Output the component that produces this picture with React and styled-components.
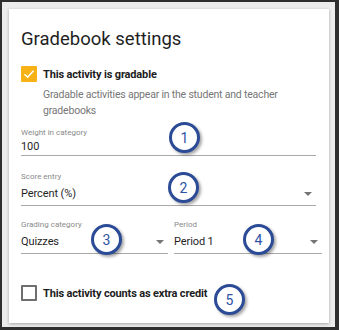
import styled, { createGlobalStyle } from "styled-components";

const GlobalStyle = createGlobalStyle`
  html, body {
    margin: 0;
    padding: 0;
    background: #2f2f2f;
  }
  * {
    box-sizing: border-box;
  }
`;

const Frame = styled.div`
  width: 339px;
  height: 330px;
  padding: 2px 4px 3px 2px;
  background: #2f2f2f;
  display: flex;
`;

const Backdrop = styled.div`
  flex: 1;
  display: flex;
  padding: 7px 6px 4px 7px;
  background: #ececec;
`;

const Card = styled.section`
  position: relative;
  flex: 1;
  display: flex;
  flex-direction: column;
  padding: 18px 13px 0 12px;
  background: #fff;
  box-shadow: 0 1px 3px rgba(0, 0, 0, 0.3);
  font-family: Roboto, "Liberation Sans", sans-serif;
  color: #212121;
`;

const Title = styled.h2`
  margin: 0;
  font-size: 18.5px;
  line-height: 24px;
  font-weight: 400;
  color: #1f1f1f;
`;

const CheckRow = styled.label`
  display: flex;
  align-items: center;
  gap: 6px;
  margin-top: ${(p) => p.$top}px;
  height: 16px;
`;

const Box = styled.span`
  width: 16px;
  height: 16px;
  flex: none;
  display: flex;
  align-items: center;
  justify-content: center;
  border-radius: 1px;
  background: ${(p) => (p.$checked ? "#f7b217" : "#fff")};
  border: ${(p) => (p.$checked ? "none" : "2px solid #6f6f6f")};
`;

const CheckText = styled.span`
  font-size: 11px;
  letter-spacing: -0.15px;
  font-weight: 700;
  color: #1c1c1c;
`;

const Hint = styled.p`
  margin: 5px 0 0 22px;
  font-size: 10.5px;
  letter-spacing: -0.2px;
  line-height: 15.5px;
  color: #777;
`;

const Field = styled.div`
  display: flex;
  flex-direction: column;
  margin-top: ${(p) => p.$top}px;
  border-bottom: 1px solid #a9a9a9;
  min-width: 0;
`;

const Label = styled.span`
  font-size: 8px;
  line-height: 11px;
  color: #8a8a8a;
`;

const Value = styled.div`
  display: flex;
  align-items: center;
  justify-content: space-between;
  font-size: 11px;
  letter-spacing: -0.1px;
  line-height: 16px;
  color: #1f1f1f;
  padding: ${(p) => (p.$select ? "4px 4px 3px 0" : "1px 0 0")};
`;

const Arrow = styled.span`
  width: 0;
  height: 0;
  border-left: 4px solid transparent;
  border-right: 4px solid transparent;
  border-top: 4px solid #757575;
`;

const Columns = styled.div`
  display: grid;
  grid-template-columns: 147px 1fr;
  gap: 6px;
  margin: 13px -6px 0 0;
`;

const Badge = styled.span`
  position: absolute;
  left: ${(p) => p.$x}px;
  top: ${(p) => p.$y}px;
  width: 31px;
  height: 31px;
  border-radius: 50%;
  border: 3px solid #2b4b97;
  background: #fff;
  box-shadow: 2px 2px 3px rgba(0, 0, 0, 0.35);
  display: flex;
  align-items: center;
  justify-content: center;
  font-size: 14px;
  color: #2e53a4;
`;

const Check = () => (
  <svg width="12" height="10" viewBox="0 0 12 10">
    <path d="M1.5 5.2 L4.6 8.2 L10.5 1.8" fill="none" stroke="#fff" strokeWidth="1.6" />
  </svg>
);

const Select = ({ label, value, top }) => (
  <Field $top={top}>
    <Label>{label}</Label>
    <Value $select>
      {value}
      <Arrow />
    </Value>
  </Field>
);

const badges = [
  { n: 1, x: 160, y: 113 },
  { n: 2, x: 159, y: 163 },
  { n: 3, x: 82, y: 215 },
  { n: 4, x: 234, y: 215 },
  { n: 5, x: 205, y: 275 },
];

export default function App() {
  return (
    <>
      <GlobalStyle />
      <Frame>
        <Backdrop>
          <Card>
            <Title>Gradebook settings</Title>
            <CheckRow $top={15}>
              <Box $checked>
                <Check />
              </Box>
              <CheckText>This activity is gradable</CheckText>
            </CheckRow>
            <Hint>Gradable activities appear in the student and teacher gradebooks</Hint>
            <Field $top={9}>
              <Label>Weight in category</Label>
              <Value>100</Value>
            </Field>
            <Select label="Score entry" value="Percent (%)" top={15} />
            <Columns>
              <Select label="Grading category" value="Quizzes" top={0} />
              <Select label="Period" value="Period 1" top={0} />
            </Columns>
            <CheckRow $top={31}>
              <Box />
              <CheckText>This activity counts as extra credit</CheckText>
            </CheckRow>
            {badges.map((b) => (
              <Badge key={b.n} $x={b.x} $y={b.y}>
                {b.n}
              </Badge>
            ))}
          </Card>
        </Backdrop>
      </Frame>
    </>
  );
}
